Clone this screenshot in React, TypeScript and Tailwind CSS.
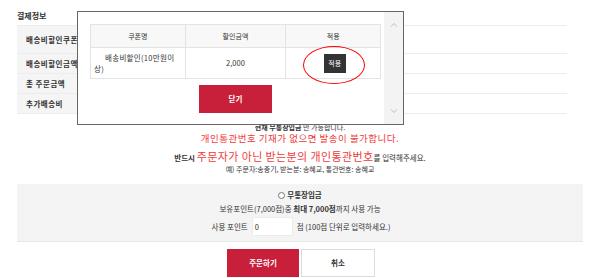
import React from "react";

const rows = [
  { label: "배송비할인쿠폰", h: "h-[28px]" },
  { label: "배송비할인금액", h: "h-[20px]" },
  { label: "총 주문금액", h: "h-[20px]" },
  { label: "추가배송비", h: "h-[20px]" },
];

const Chevron = ({ up }: { up?: boolean }) => (
  <svg width="8" height="5" viewBox="0 0 8 5" className="block">
    <path
      d={up ? "M1 4.5 L4 1.5 L7 4.5" : "M1 0.5 L4 3.5 L7 0.5"}
      fill="none"
      stroke="#bdbdbd"
      strokeWidth="1"
    />
  </svg>
);

const CouponModal = () => {
  return (
    <div className="absolute left-[77px] top-[11px] w-[327px] h-[114px] border border-[#666] bg-white flex">
      <div className="flex-1 pl-[12px] pt-[12px]">
        <table className="w-[291px] border-collapse text-[7px] text-[#333]">
          <thead>
            <tr className="h-[23px] bg-[#f8f8f8]">
              <th className="w-[95px] border border-[#e3e3e3] font-normal">쿠폰명</th>
              <th className="w-[101px] border border-[#e3e3e3] font-normal">할인금액</th>
              <th className="w-[95px] border border-[#e3e3e3] font-normal">적용</th>
            </tr>
          </thead>
          <tbody>
            <tr className="h-[31px]">
              <td className="border border-[#e3e3e3] px-[3px] text-left text-[7.5px] tracking-[0.3px] leading-[11px]">
                <span className="pl-[11px]">배송비할인(10만원이</span>
                <br />
                상)
              </td>
              <td className="border border-[#e3e3e3] text-center text-[7.5px]">2,000</td>
              <td className="border border-[#e3e3e3] text-center">
                <span className="inline-flex items-center justify-center w-[22px] h-[19px] bg-[#333] text-white text-[7px] ml-[3px]">
                  적용
                </span>
              </td>
            </tr>
          </tbody>
        </table>
        <div className="w-[291px] flex justify-center mt-[6px]">
          <button className="w-[73px] h-[28px] bg-[#c8203a] text-white text-[7.5px] font-bold">
            닫기
          </button>
        </div>
      </div>
      <div className="w-[19px] bg-[#f3f3f3] flex flex-col items-center justify-between py-[10px]">
        <Chevron up />
        <Chevron />
      </div>
    </div>
  );
};

export default function App() {
  return (
    <div className="relative w-[600px] h-[278px] overflow-hidden bg-white text-[#333] font-['Noto_Sans_CJK_KR','Noto_Sans',sans-serif]">
      <div className="px-[17px] pt-[8px]">
        <h3 className="h-[15px] leading-[15px] text-[8px] font-bold mb-[2px]">결제정보</h3>
        <div className="mr-[16px] border-b border-[#ededed]">
          {rows.map((r) => (
            <div key={r.label} className={`flex border-t border-[#ededed] ${r.h}`}>
              <div className="w-[120px] bg-[#f5f5f5] pl-[9px] flex items-center text-[7.5px] font-bold tracking-[0.5px]">
                {r.label}
              </div>
              <div className="flex-1" />
            </div>
          ))}
        </div>
      </div>

      <div className="pt-[8px] text-center">
        <p className="h-[10px] leading-[10px] text-[7px]">
          <b>현재 무통장입금</b> 만 가능합니다.
        </p>
        <p className="h-[13px] leading-[13px] text-[9.5px] text-[#f03a3a] tracking-[0.5px]">
          개인통관번호 기재가 없으면 발송이 불가합니다.
        </p>
        <p className="mt-[5px] h-[13px] leading-[13px] text-[7.5px]">
          <b>반드시</b>{" "}
          <span className="text-[11px] text-[#f03a3a] tracking-[0.4px]">주문자가 아닌 받는분의 개인통관번호</span>를 입력해주세요.
        </p>
        <p className="mt-[2px] h-[9px] leading-[9px] text-[7px]">
          예) 주문자:송중기, 받는분: 송혜교, 통관번호: 송혜교
        </p>
      </div>

      <div className="mx-[17px] mt-[10px] h-[58px] bg-[#f4f4f4] border-b border-[#e6e6e6] pt-[6px] text-[7.5px] flex flex-col items-center">
        <label className="h-[10px] flex items-center gap-[2px]">
          <span className="w-[7px] h-[7px] rounded-full border border-[#777] bg-white" />
          <b>무통장입금</b>
        </label>
        <p className="mt-[4px] h-[10px] leading-[10px]">
          보유포인트(7,000점)중 <b>최대 7,000점</b>까지 사용 가능
        </p>
        <div className="mt-[3px] flex items-center gap-[4px] pl-[2px]">
          <span>사용 포인트</span>
          <span className="w-[41px] h-[19px] bg-white border border-[#ececec] flex items-center px-[2px]">0</span>
          <span>점 (100점 단위로 입력하세요.)</span>
        </div>
      </div>

      <div className="mt-[7px] flex justify-center gap-[2px] pl-[2px]">
        <button className="w-[72px] h-[28px] bg-[#c8203a] text-white text-[7.5px] font-bold">주문하기</button>
        <button className="w-[74px] h-[28px] bg-white border border-[#dcdcdc] text-[7.5px] font-bold">취소</button>
      </div>

      <CouponModal />

      <div className="absolute left-[303px] top-[46px] w-[62px] h-[38px] rounded-[50%] border-[1.5px] border-[#f00]" />
    </div>
  );
}
